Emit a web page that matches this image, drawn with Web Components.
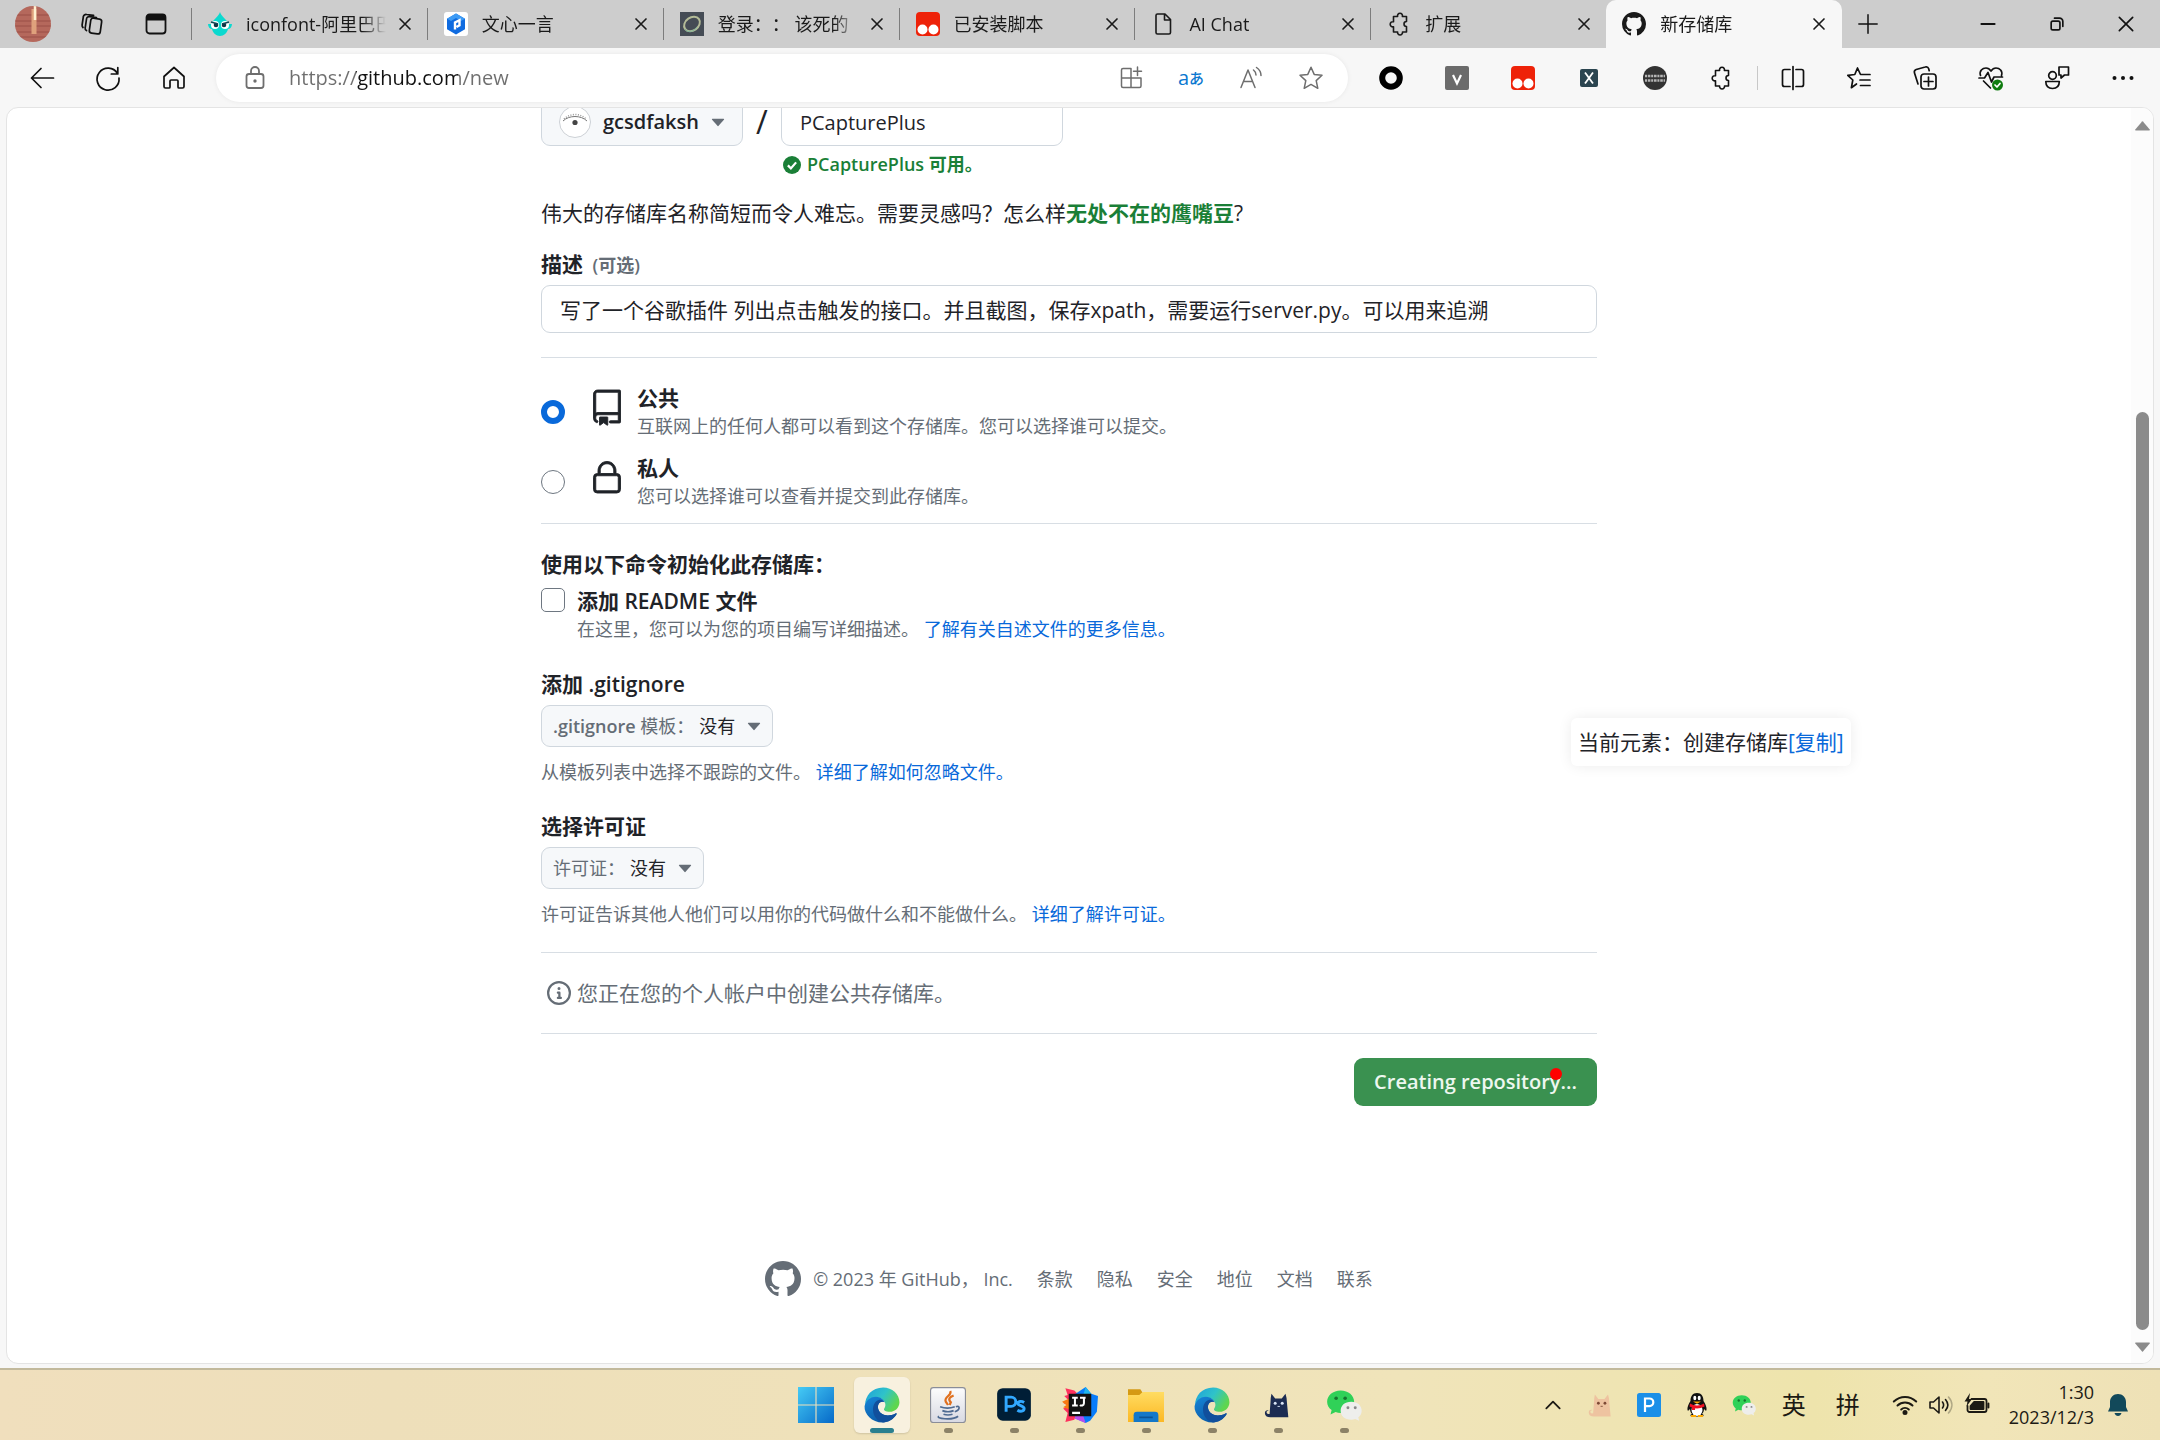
<!DOCTYPE html>
<html lang="zh-CN">
<head>
<meta charset="utf-8">
<title>新存储库</title>
<style>
  html { height: 100%; }
  body {
    margin: 0; min-height: 100%; display: flex; flex-direction: column;
    font-family: "Open Sans", "Noto Sans CJK SC", sans-serif;
    font-size: 21px; line-height: 32px; color: #1f2328; background: #f7f7f7;
    --blue: #0969da; --muted: #656d76; --green: #1a7f37; --line: #d0d7de; --small: 18px; --latin: 20px;
  }
  browser-page { flex: 1; }
</style>
</head>
<body>
<tab-strip></tab-strip>
<address-row></address-row>
<browser-page></browser-page>
<task-bar></task-bar>

<script>
const close = '<path d="M6 6l12 12M18 6L6 18"/>';
const puzzle = '<path d="M8 4.500h2.600a2.500 2.500 0 1 1 4.800 0H19.500v5a2.500 2.500 0 1 0 0 5V20h-4a2.500 2.500 0 1 1-4.900 0H6.500v-5.200a2.600 2.600 0 1 1 0-5V4.500z"/>';
const edge = `<defs><linearGradient id="e1" x1="0" y1="0" x2="1" y2=".5"><stop offset="0" stop-color="#1f9fdc"/><stop offset=".55" stop-color="#2fc3c9"/><stop offset="1" stop-color="#5fd64e"/></linearGradient><linearGradient id="e2" x1="0" y1="0" x2=".6" y2="1"><stop offset="0" stop-color="#1685d8"/><stop offset="1" stop-color="#0c59a4"/></linearGradient></defs>
<path fill="url(#e1)" d="M1 16C1 8 7 0.500 17 0.500c8 0 14.500 6 14.500 13 0 5-4 8.500-8.500 8.500-4 0-6-1.500-5-3 1.500-2 1.500-5-1-7.500C12 7 4 9 1 16z"/>
<path fill="url(#e2)" d="M.5 17C2 10 9 7 14.500 9.500c2 1 3.500 2.500 3.800 4-4-1.500-7 2-5.500 6.500 1.700 5 8.500 7 15.200 3.500.8-.4 1.300.2.800 1C26 29 21.500 31.500 16.500 31.500 7 31.500 0 24 .5 17z"/>
<path fill="#114f9c" d="M8 20c0-4 2-7.500 5-8.500 2-.6 4 .3 5.300 2-4-1.500-7 2-5.500 6.500 1.700 5 8.500 7 15.200 3.500.8-.4 1.300.2.800 1C26 29 21.500 31.500 17 31.500 12 30.500 8 26 8 20z"/>`;
const wechat = `<path fill="#30d158" d="M13 3C6 3 1 7.500 1 13c0 3 1.500 5.500 4 7.500l-1 4 4.500-2.300c1.400.5 3 .8 4.500.8 7 0 12-4.500 12-10S20 3 13 3z"/><circle cx="9" cy="10" r="1.600" fill="#16752f"/><circle cx="17" cy="10" r="1.600" fill="#16752f"/><path fill="#eeeeec" d="M22.500 13C16.500 13 13 16.500 13 21s3.500 8 9.500 8c1.200 0 2.400-.2 3.500-.6l3.500 1.600-.8-3.200c2-1.400 3-3.400 3-5.800 0-4.500-3.700-8-9.200-8z"/><circle cx="19.500" cy="18.500" r="1.300" fill="#888"/><circle cx="26" cy="18.500" r="1.300" fill="#888"/>`;
const monkey = '<rect width="24" height="24" rx="4" fill="#ee2209"/><circle cx="6.500" cy="17.500" r="5" fill="#fff" /><circle cx="17.500" cy="17.500" r="5" fill="#fff"/>';
const cat = (body, eye) => `<path fill="${body}" d="M9 4l4 5h7l4-5c1 3 1.500 6 1.500 9L27 29H8c-4 0-6-1.500-6-4.500S5 21 6 22c-2 0-2.500 1-2 2.500.5 1 1.500 1.300 3 1L8 13c0-3 .3-6 1-9z"/><circle cx="13" cy="14" r="1.600" fill="${eye}"/><circle cx="20.500" cy="14" r="1.600" fill="${eye}"/><path d="M15.500 17.500h2.500" stroke="${eye}" stroke-width="1"/>`;

/* s: stroked outline on a 24 grid; f: filled drawing with its own view box */
const ICONS = {
  close: { s: close, w: 2 },
  workspaces: { s: '<rect x="10" y="6.500" width="11" height="15" rx="2.500" transform="rotate(8 15 14)"/><path d="M6.500 18.500C5.500 18 5 17 5.200 16l1.300-9c.2-1.600 1.500-2.500 3-2.300l7 .8M3 15.500c-.8-.7-1-1.500-.9-2.500l1.200-8C3.500 3.300 5 2.200 6.600 2.500l7 .8"/>' },
  vtabs: { s: '<rect x="2.500" y="2.500" width="19" height="19" rx="3"/><path fill="currentColor" d="M3 7.500V6a3 3 0 0 1 3-3h12a3 3 0 0 1 3 3v1.500z"/>', w: 1.8 },
  file: { s: '<path d="M5 3.500A1.500 1.500 0 0 1 6.500 2H14l5.500 5.500v13A1.500 1.500 0 0 1 18 22H6.500A1.500 1.500 0 0 1 5 20.500zM13.500 2v6h6"/>', w: 1.6 },
  puzzle: { s: puzzle, w: 1.6 },
  plus: { s: '<path d="M12 1v22M1 12h22"/>', w: 1.8 },
  min: { s: '<path d="M4 12h16"/>', w: 2.2 },
  restore: { s: '<rect x="5" y="8.500" width="10.500" height="10.500" rx="2"/><path d="M9 5h6a4 4 0 0 1 4 4v6"/>', w: 2 },
  wclose: { s: '<path d="M4 4l16 16M20 4L4 20"/>', w: 2 },
  back: { s: '<path d="M23.500 12H1.500M11 2.500L1.500 12l9.500 9.500"/>' },
  reload: { s: '<path d="M21.500 7.500A11 11 0 1 0 23 12M21.800 1.500v6.500h-6.500"/>' },
  home: { s: '<path d="M2 10.500L12 1.500l10 9V20.500a1.500 1.500 0 0 1-1.500 1.500h-3.500a1 1 0 0 1-1-1V15a1 1 0 0 0-1-1h-6a1 1 0 0 0-1 1v6a1 1 0 0 1-1 1H3.500A1.500 1.500 0 0 1 2 20.500z"/>' },
  padlock: { s: '<rect x="3.500" y="8" width="17" height="14" rx="2.500"/><path d="M8 8V5a4 4 0 0 1 8 0v3"/><circle cx="12" cy="15" r=".8" fill="currentColor"/>', w: 1.8 },
  apps: { s: '<path d="M12 2.500H4A1.500 1.500 0 0 0 2.500 4v16A1.500 1.500 0 0 0 4 21.500H20.500a1.500 1.500 0 0 0 1.500-1.500v-8H2.500M12 2.500v19M18.500 1v8.500M14.500 5.200h8"/>', w: 1.5 },
  readaloud: { s: '<path d="M2 21.500L9 4l7 17.500M4.500 15.500h9M14.500 4c1.500 1.200 2.500 3 2.500 5M17.500 1.500C20.500 3.500 22 6 22 9.500"/>', w: 1.5 },
  star: { s: '<path d="M12 1.200l3.200 7.200 7.800.9-5.800 5.300 1.600 7.700L12 18.400l-6.800 3.900 1.600-7.700L1 9.300l7.800-.9z"/>', w: 1.5 },
  split: { s: '<path d="M9 3.500H3.500A2 2 0 0 0 1.500 5.500v13a2 2 0 0 0 2 2H9M15 3.500h5.500a2 2 0 0 1 2 2v13a2 2 0 0 1-2 2H15M12 .5v23"/>', w: 1.7 },
  favs: { s: '<path d="M15 8.500h-1.500L10.500 2 7.800 8.500.8 9.300l5 4.700-1.400 7.700L9.500 18M14.500 8.500h8.500M13 14h10M13.500 19.500h9.500"/>', w: 1.7 },
  collections: { s: '<rect x="8" y="8" width="15" height="15" rx="3"/><path d="M15.500 11v9M11 15.500h9M5 18L1.500 7C1 5.300 1.700 4 3.200 3.500l9-2.500c1.500-.5 3 .2 3.500 1.700l.5 2"/>', w: 1.7 },
  health: { s: '<path d="M1.500 9.500C0 5 3.500 2 7 2c2.500 0 4 1.500 5 3 1-1.500 2.500-3 5-3 3.500 0 7 3 5.500 7.500M0 12h5.500l3.500-5.500 3.500 9.500 2.500-5h8.500M4.500 15l7 7"/><circle cx="18.500" cy="19" r="5.500" fill="#107c10" stroke="none"/><path stroke="#fff" d="M16 19l2 2 3-3.500"/>', w: 1.7 },
  people: { s: '<circle cx="7.500" cy="9.500" r="3.800"/><path d="M.8 15.500h13.500c0 4.500-2.500 7-6.800 7s-6.700-2.500-6.700-7zM14 1h9.500v8h-4l-3.500 3V9h-2z"/>', w: 1.7 },
  dots: { f: '<circle cx="3.500" cy="12" r="2"/><circle cx="12" cy="12" r="2"/><circle cx="20.500" cy="12" r="2"/>' },
  ring: { f: '<circle cx="12" cy="12" r="8.800" fill="none" stroke="#000" stroke-width="6"/>' },
  vbox: { f: '<rect width="24" height="24" rx="2" fill="#6b6b6b"/><path d="M8 9l4 8.500L16 9" fill="none" stroke="#fff" stroke-width="2.200"/>' },
  monkey: { f: monkey },
  xbox: { f: '<rect x="3" y="3" width="18" height="18" rx="2" fill="#2b4550"/><path d="M8 6.500l8 11M16 6.500l-8 11" stroke="#fff" stroke-width="1.800"/>' },
  badge: { f: '<circle cx="12" cy="12" r="12" fill="#333"/><path d="M2 10h20M2 14.500h20" stroke="#b5b5b5" stroke-width="2.600" stroke-dasharray="2 .8 2.600 .8"/>' },
  iconfont: { f: '<path d="M12 0c1 4 7 8 9 12h3c0 3-2 5-4 5-1 4-4 7-8 7s-7-3-8-7c-2 0-4-2-4-5h3c2-4 8-8 9-12z" fill="#0bd9cf"/><circle cx="7" cy="13" r="4" fill="#fff"/><circle cx="17" cy="13" r="4" fill="#fff"/><circle cx="8" cy="13" r="2.300" fill="#134"/><circle cx="16" cy="13" r="2.300" fill="#134"/><path d="M3 10l7 2M21 10l-7 2" stroke="#145" stroke-width="1.500"/>' },
  yiyan: { f: '<rect width="24" height="24" rx="3" fill="#fff"/><path d="M12 1.500l9 5.200v10.600l-9 5.200-9-5.200V6.700z" fill="#0f6be0"/><path d="M12 1.500l9 5.200-4 2.200-5-2.800-5 2.800-4-2.200z" fill="#3d9bf5"/><path d="M11 17.500v-7l4.500-2.300v5L12.500 15" fill="none" stroke="#fff" stroke-width="2.400"/>' },
  login: { f: '<rect width="24" height="24" fill="#454c55"/><ellipse cx="12" cy="12" rx="8.500" ry="6.500" transform="rotate(-35 12 12)" fill="none" stroke="#b4bc98" stroke-width="2"/><path d="M5 17c2 4 9 3 12-2" fill="none" stroke="#7ab39a" stroke-width="1"/>' },
  github: { v: 16, f: '<path d="M8 0c4.420 0 8 3.580 8 8a8.013 8.013 0 0 1-5.450 7.590c-.4.080-.55-.17-.55-.38 0-.27.010-1.130.010-2.200 0-.75-.25-1.230-.54-1.480 1.780-.2 3.650-.88 3.650-3.950 0-.88-.31-1.590-.82-2.150.080-.2.360-1.020-.08-2.120 0 0-.67-.22-2.200.82-.64-.18-1.320-.27-2-.27-.68 0-1.360.090-2 .27-1.530-1.030-2.200-.82-2.200-.82-.44 1.100-.16 1.920-.08 2.120-.51.560-.82 1.280-.82 2.150 0 3.060 1.860 3.750 3.640 3.950-.23.2-.44.550-.51 1.070-.46.210-1.610.550-2.330-.66-.15-.24-.6-.83-1.230-.82-.67.010-.27.380.010.530.340.190.730.9.820 1.130.160.450.680 1.310 2.690.940 0 .670.010 1.300.010 1.490 0 .210-.15.450-.55.380A7.995 7.995 0 0 1 0 8c0-4.420 3.580-8 8-8Z"/>' },
  repo: { f: '<path d="M3 2.750A2.750 2.750 0 0 1 5.750 0h14.500a.75.750 0 0 1 .75.750v20.500a.75.750 0 0 1-.75.750h-6a.75.750 0 0 1 0-1.500h5.250v-4H6A1.500 1.500 0 0 0 4.500 18v.75c0 .716.430 1.334 1.050 1.605a.75.750 0 0 1-.6 1.374A3.251 3.251 0 0 1 3 18.750ZM19.500 1.500H5.750c-.69 0-1.250.560-1.250 1.250v12.651A2.989 2.989 0 0 1 6 15h13.500Z M7 18.250a.25.250 0 0 1 .25-.25h5a.25.250 0 0 1 .25.250v5.010a.25.250 0 0 1-.397.201l-2.206-1.604a.25.250 0 0 0-.294 0L7.397 23.460a.25.250 0 0 1-.397-.2v-5.010Z" stroke="currentColor" stroke-width=".6"/>' },
  lock: { f: '<path d="M6 9V7.250C6 3.845 8.503 1 12 1s6 2.845 6 6.250V9h.5a2.500 2.500 0 0 1 2.500 2.500v8a2.500 2.500 0 0 1-2.500 2.500h-13A2.500 2.500 0 0 1 3 19.500v-8A2.500 2.500 0 0 1 5.500 9Zm-1.500 2.500v8a1 1 0 0 0 1 1h13a1 1 0 0 0 1-1v-8a1 1 0 0 0-1-1h-13a1 1 0 0 0-1 1Zm3-4.250V9h9V7.250c0-2.670-1.922-4.750-4.500-4.750-2.578 0-4.500 2.080-4.500 4.750Z" stroke="currentColor" stroke-width=".6"/>' },
  info: { v: 16, f: '<path d="M0 8a8 8 0 1 1 16 0A8 8 0 0 1 0 8Zm8-6.500a6.500 6.500 0 1 0 0 13 6.500 6.500 0 0 0 0-13ZM6.500 7.750A.75.750 0 0 1 7.250 7h1a.75.750 0 0 1 .75.750v2.750h.25a.75.750 0 0 1 0 1.500h-2a.75.750 0 0 1 0-1.500h.25v-2h-.25a.75.750 0 0 1-.75-.75ZM8 6a1 1 0 1 1 0-2 1 1 0 0 1 0 2Z"/>' },
  check: { f: '<circle cx="12" cy="12" r="12"/><path d="M6.500 12.500l4 4 7-8" fill="none" stroke="#fff" stroke-width="3"/>' },
  caret: { f: '<path d="M1.500 7.500Q1.500 6.500 2.500 6.500h19q1 0 1 1L12.600 19q-.6.500-1.200 0z"/>' },
  avatar: { v: 32, f: '<circle cx="16" cy="16" r="15.500" fill="#fff" stroke="#ccd0d5"/><path d="M4 15c6-6 18-6 24 0" fill="none" stroke="#777" stroke-width="1"/><path d="M5 13c6-6 16-6 22 0" fill="none" stroke="#999" stroke-width="1.500" stroke-dasharray="1 1.500"/><circle cx="16" cy="16.500" r="2.600" fill="#444"/>' },
  profile: { v: 36, f: '<defs><clipPath id="c"><circle cx="18" cy="18" r="18"/></clipPath></defs><g clip-path="url(#c)"><path fill="#b5685c" d="M0 0h36v36H0z"/><path d="M0 9h36M0 15h36M0 20h36M0 26h36M0 31h36" stroke="#9a4f47" stroke-width="1"/><path d="M19 3v25" stroke="#dfa17c" stroke-width="5"/><path d="M20 0v14" stroke="#fff0d0" stroke-width="2.500"/></g>' },
  windows: { v: 32, f: '<defs><linearGradient id="w" x1="0" y1="0" x2="1" y2="1"><stop offset="0" stop-color="#45cbf5"/><stop offset="1" stop-color="#0669c8"/></linearGradient></defs><path fill="url(#w)" d="M0 0h15.500v15.500H0zM16.500 0H32v15.500H16.500zM0 16.500h15.500V32H0zM16.500 16.500H32V32H16.500z"/>' },
  edge: { v: 32, f: edge },
  java: { v: 32, f: '<defs><linearGradient id="j" x1="0" y1="0" x2="0" y2="1"><stop offset="0" stop-color="#fdfdfd"/><stop offset="1" stop-color="#d8d9e2"/></linearGradient></defs><rect x=".5" y=".5" width="31" height="31" rx="2.500" fill="url(#j)" stroke="#8a8d98"/><path d="M18 3.500c2 4-6 5-4 9.500l2 3M21 7.500c-4 1.500-5 3.500-2.500 6l-1 2.500" fill="none" stroke="#e0701e" stroke-width="2"/><path d="M9 17.500c4 1.500 9 1.500 13 0M11 21c3 1.200 7 1.200 10 0M12 24.200c3 1 5 1 8 0M8 26c-4 2 12 4 17 0M23 17.500c4-1.500 4 3-1 4.500" fill="none" stroke="#4f6b92" stroke-width="1.500"/>' },
  ps: { v: 32, f: '<rect x="1" y="1" width="30" height="29" rx="5" fill="#001e36"/><path d="M9 22V9h4.500a4 4 0 0 1 0 8.200H9M25 13.700c-2.500-1.600-5.500-1-5.500 1s5.500 1.900 5.500 4.500-3.500 3-6 1.500" fill="none" stroke="#31a8ff" stroke-width="2.600"/>' },
  idea: { v: 32, f: '<path fill="#fe315d" d="M3 1l8 2 6 6-6 20-8 2 2-8-4-4 5-2-5-3 5-2-4-4 3-1z"/><path fill="#f97a12" d="M0 13l7-3v10l-6-2 3-2z"/><path fill="#087cfa" d="M21 0l5 6 6 2-1 14-6 8-4 2-9-4V6z"/><path fill="#1fb6f0" d="M21 0l5 6-8 4z"/><path fill="#b84cf0" d="M11 28l6-8 4 12z"/><path fill="#111" d="M6 6h20v20H6z"/><path d="M9 9.500h5M11.500 9.500v7M9 16.500h5M16 9.500h5M19.500 9.500v5c0 2-2.500 2.500-3.500 1.500M9 23h7" stroke="#fff" stroke-width="1.800" fill="none"/>' },
  folder: { v: 32, f: '<defs><linearGradient id="f" x1="0" y1="0" x2="0" y2="1"><stop offset="0" stop-color="#ffdc62"/><stop offset="1" stop-color="#fcb824"/></linearGradient></defs><path fill="#d59a14" d="M0 2h11l2 3-2 4H0z"/><path fill="url(#f)" d="M0 7h10l3-2.500h19V31H0z"/><path fill="#1478c8" d="M5 31v-6a3 3 0 0 1 3-3h16a3 3 0 0 1 3 3v6z"/><path d="M10 27h12" stroke="#0b5394" stroke-width="1.500"/>' },
  cat: { v: 32, f: cat('#1c2c52', '#d9e4f5') },
  peachcat: { v: 32, f: cat('#eec3a0', '#7d4a35') },
  wechat: { v: 32, f: wechat },
  chevron: { s: '<path d="M4 16l8-8 8 8"/>', w: 2.2 },
  pbox: { f: '<rect width="24" height="24" rx="2.500" fill="#1b8fe8"/><path d="M8 19V5.500h4.500a3.800 3.800 0 0 1 0 7.600H8" fill="none" stroke="#fff" stroke-width="2.200"/>' },
  qq: { f: '<path d="M12 0C7.500 0 5.500 3.500 5.500 8c-2 3-3.500 6.500-3 9 .5 1.500 1.500 0 2.500-1 0 2 1 4 2 5-2 .5-2 2.500 0 2.500h10c2 0 2-2 0-2.500 1-1 2-3 2-5 1 1 2 2.500 2.500 1 .5-2.500-1-6-3-9 0-4.500-2-8-6.500-8z" fill="#111"/><ellipse cx="12" cy="17" rx="5.500" ry="6" fill="#fff"/><path d="M5 10.500c4 2.500 10 2.500 14 0l.5 3c-5 2.500-10 2.500-15 0z" fill="#e12"/><path fill="#e12" d="M7 12l3.500 1-.5 4H7z"/><ellipse cx="9.800" cy="5" rx="1.500" ry="2.200" fill="#fff"/><ellipse cx="14.200" cy="5" rx="1.500" ry="2.200" fill="#fff"/><path fill="#fa0" d="M8 8.500h8l-4 2.200zM6 22h5v2H6zM13 22h5v2h-5z"/>' },
  wifi: { s: '<path d="M.8 8.500c6.500-6 16-6 22.400 0M4.500 12.500c4.300-4 10.700-4 15 0M8.200 16.500c2.200-2 5.400-2 7.600 0"/><circle cx="12" cy="19.500" r="1.500" fill="currentColor"/>', w: 2 },
  volume: { s: '<path d="M1 9h3.500L10 4v16l-5.500-5H1zM13.500 9c1.500 2 1.500 4 0 6"/><path d="M16.500 6.500c3 3.500 3 7.500 0 11" /><path opacity=".3" d="M19.500 4c4.500 5 4.500 11 0 16"/>', w: 1.6 },
  battery: { s: '<path d="M6.500 6H19.500a2 2 0 0 1 2 2v9a2 2 0 0 1-2 2H4.500a2 2 0 0 1-2-2V13M23.500 10.500v4"/><path fill="currentColor" d="M9 9h9.500v7H5.500v-3z"/><path stroke="none" fill="currentColor" d="M5 0L-.5 8.500h3l-1 5 5.500-7.500h-3z"/>', w: 1.8 },
  bell: { f: '<path d="M12 1c-4.500 0-8 3.500-8 8v5l-2 4.500h20L20 14V9c0-4.500-3.500-8-8-8zM8.500 20h7c-.5 2-2 3-3.500 3s-3-1-3.500-3z"/>' }
};

function define(name, html, setup) {
  const t = document.createElement('template');
  t.innerHTML = html;
  customElements.define(name, class extends HTMLElement {
    constructor() {
      super();
      this.attachShadow({ mode: 'open' }).append(t.content.cloneNode(true));
    }
    connectedCallback() { if (setup) setup(this, this.shadowRoot); }
  });
}

/* Swaps the <i> placeholder of a template for the icon its host asks for */
function placeIcon(el, root) {
  const icon = document.createElement('ui-icon');
  icon.setAttribute('name', el.getAttribute('icon'));
  root.querySelector('i').replaceWith(icon);
}

/* Shared reset for native buttons */
const btn = 'button{border:0;background:none;padding:0;margin:0;color:inherit;font:inherit;display:flex;align-items:center;justify-content:center}';

define('ui-icon', `<style>:host{display:inline-flex;flex:none;width:var(--s,24px);height:var(--s,24px)}svg{width:100%;height:100%;overflow:visible}</style><svg aria-hidden="true"></svg>`, (el, root) => {
  const i = ICONS[el.getAttribute('name')], svg = root.querySelector('svg');
  svg.setAttribute('viewBox', `0 0 ${i.v || 24} ${i.v || 24}`);
  svg.innerHTML = i.s
    ? `<g fill="none" stroke="currentColor" stroke-width="${i.w || 1.7}" stroke-linecap="round" stroke-linejoin="round">${i.s}</g>`
    : `<g fill="currentColor">${i.f}</g>`;
});

/* ---------- tab strip ---------- */
define('browser-tab', `<style>${btn}
  :host{display:flex;align-items:center;flex:1 1 0;min-width:0;box-sizing:border-box;height:32px;margin:0 0 8px;padding:0 12px 0 16px;gap:14px;border-left:1px solid #7d7d7d;font-size:var(--small);line-height:27px;color:#1a1a1a}
  :host([active]){background:#f7f7f7;height:48px;margin:0;padding:0 13px 0 16px;border-left:0;border-radius:10px 10px 0 0}
  .title{flex:1;min-width:0;overflow:hidden;white-space:nowrap;text-spacing-trim:space-all;-webkit-mask-image:linear-gradient(90deg,#000 calc(100% - 24px),transparent)}
  button{width:20px;height:20px;--s:20px;margin-left:-5px}
  </style><i></i><span class="title"><slot></slot></span><button aria-label="关闭标签页"><ui-icon name="close"></ui-icon></button>`, placeIcon);

define('tab-strip', `<style>${btn}
  :host{display:flex;align-items:flex-end;height:48px;background:#cdcdcd;color:#111}
  .lead{display:flex;align-items:center;height:48px;width:191px;box-sizing:border-box;padding-left:15px;gap:40px}
  .lead button:first-child{--s:36px;margin-right:-11px}
  .tabs{display:flex;align-items:flex-end;flex:0 1 1651px;min-width:0}
  .new{width:52px;height:48px;--s:20px}
  .win{display:flex;margin-left:auto}.win button{width:69px;height:48px;--s:20px}
  </style>
  <div class="lead"><button aria-label="个人资料"><ui-icon name="profile"></ui-icon></button><button aria-label="工作区"><ui-icon name="workspaces"></ui-icon></button><button aria-label="标签操作"><ui-icon name="vtabs"></ui-icon></button></div>
  <nav class="tabs">
    <browser-tab icon="iconfont">iconfont-阿里巴巴</browser-tab>
    <browser-tab icon="yiyan">文心一言</browser-tab>
    <browser-tab icon="login">登录：： 该死的</browser-tab>
    <browser-tab icon="monkey">已安装脚本</browser-tab>
    <browser-tab icon="file">AI Chat</browser-tab>
    <browser-tab icon="puzzle">扩展</browser-tab>
    <browser-tab icon="github" active>新存储库</browser-tab>
  </nav>
  <button class="new" aria-label="新建标签页"><ui-icon name="plus"></ui-icon></button>
  <div class="win"><button aria-label="最小化"><ui-icon name="min"></ui-icon></button><button aria-label="还原"><ui-icon name="restore"></ui-icon></button><button aria-label="关闭"><ui-icon name="wclose"></ui-icon></button></div>`);

/* ---------- toolbar ---------- */
define('address-row', `<style>${btn}
  :host{display:flex;align-items:center;height:59px;background:#f7f7f7;color:#111;padding:0 4px 0 9px}
  .nav,.ext{display:flex}.nav button,.ext button{width:66px;height:48px}
  .box{flex:1;display:flex;align-items:center;height:48px;margin:0 10px 0 9px;padding:0 7px 0 27px;border-radius:24px;background:#fff;box-shadow:0 0 5px #0001;color:#6e6e6e}
  input{flex:1;min-width:0;margin:0 0 0 22px;padding:0;border:0;outline:0;font:inherit;font-size:var(--latin);line-height:32px;
    color:#6e6e6e;-webkit-text-fill-color:transparent;-webkit-background-clip:text;background-clip:text;
    background-image:linear-gradient(90deg,#6e6e6e 67px,#111 67px,#111 169px,#6e6e6e 169px)}
  .box button{width:60px}
  .lang{color:#0b78d0;font-size:20px}.lang b{font-size:15px;font-weight:500}
  .sep{width:1px;height:24px;margin:12px 2px 12px 3px;background:#c8c8c8}
  </style>
  <div class="nav"><button aria-label="返回"><ui-icon name="back"></ui-icon></button><button aria-label="刷新"><ui-icon name="reload"></ui-icon></button><button aria-label="主页"><ui-icon name="home"></ui-icon></button></div>
  <div class="box"><ui-icon name="padlock"></ui-icon><input type="text" aria-label="地址" value="https://github.com/new">
    <button aria-label="应用"><ui-icon name="apps"></ui-icon></button><button class="lang">a<b>あ</b></button><button aria-label="朗读"><ui-icon name="readaloud"></ui-icon></button><button aria-label="收藏"><ui-icon name="star"></ui-icon></button></div>
  <div class="ext"></div>`, (el, root) => {
  const b = n => `<button aria-label="${n}"><ui-icon name="${n}"></ui-icon></button>`;
  root.querySelector('.ext').innerHTML =
    ['ring', 'vbox', 'monkey', 'xbox', 'badge', 'puzzle'].map(b).join('') + '<span class="sep"></span>' +
    ['split', 'favs', 'collections', 'health', 'people', 'dots'].map(b).join('');
});

/* ---------- page ---------- */
define('menu-button', `<style>${btn}
  :host{display:block}
  button{height:42px;padding:0 11px;border:1px solid var(--line);border-radius:9px;background:#f6f8fa;font-size:var(--small);line-height:27px;white-space:nowrap;--s:14px;gap:12px}
  :host([large]) button{height:48px;padding:0 17px;font-size:var(--latin);line-height:24px;font-weight:600}
  ::slotted([slot=label]){color:var(--muted);margin-right:5px}ui-icon[name=caret]{color:var(--muted)}
  </style><button aria-haspopup="menu"><slot name="lead"></slot><span><slot name="label"></slot><slot></slot></span><ui-icon name="caret"></ui-icon></button>`);

define('visibility-option', `<style>
  :host{display:block}
  label{display:flex;align-items:center;--s:36px}
  input{appearance:none;box-sizing:border-box;width:24px;height:24px;margin:0 24px 0 0;border:1px solid #6e7781;border-radius:50%;background:#fff;flex:none}
  input:checked{border:6px solid var(--blue)}
  ui-icon{margin:0 12px 8px 0}
  strong{display:block;font-weight:600;line-height:30px}
  small{display:block;font-size:var(--small);line-height:27px;color:var(--muted)}
  </style><label><input type="radio" name="visibility"><i></i><span><strong><slot name="title"></slot></strong><small><slot></slot></small></span></label>`, (el, root) => {
  root.querySelector('input').checked = el.hasAttribute('checked');
  placeIcon(el, root);
});

define('repo-form', `<style>${btn}
  :host{display:block}
  form{margin:0}
  .row{display:flex;align-items:center;margin-top:-10px;height:48px}
  .row menu-button{margin:0}
  .slash{font-size:32px;line-height:26px;width:38px;text-align:center;font-weight:500}
  input[type=text]{box-sizing:border-box;height:48px;border:1px solid var(--line);border-radius:9px;background:#fff;padding:0 18px;font:inherit;color:inherit;outline:0}
  #name{width:282px;font-size:var(--latin);line-height:24px}
  .ok{display:flex;align-items:center;gap:6px;margin:5px 0 19px 242px;font-size:var(--small);line-height:27px;font-weight:600;color:var(--green);--s:18px}
  p{margin:0}
  p b{font-weight:600;color:var(--green)}
  .desc{display:block;margin:19px 0 4px;font-weight:600}
  .desc small{font-size:var(--small);color:var(--muted);margin-left:4px}
  #desc{width:100%;display:block}
  hr{height:1px;border:0;margin:24px 0;background:#d8dee4}
  .vis{display:flex;flex-direction:column;gap:13px;margin-top:25px}
  .vis + hr{margin:13px 0 24px}
  h2{margin:0;font-size:21px;line-height:32px;font-weight:600}
  .check{display:flex;gap:12px;margin:6px 0 25px}
  .check input{appearance:none;box-sizing:border-box;width:24px;height:24px;margin:2px 0 0;border:1px solid #6e7781;border-radius:5px;background:#fff;flex:none}
  .check label{display:block;line-height:30px;font-weight:600}
  .hint{font-size:var(--small);line-height:27px;color:var(--muted)}
  a{color:var(--blue);text-decoration:none}
  menu-button{margin:5px 0 12px}
  .hint + h2{margin-top:24px}
  .info{display:flex;align-items:center;gap:6px;padding-left:6px;color:var(--muted)}
  .end{display:flex;justify-content:flex-end}
  .submit{position:relative;height:48px;padding:0 20px;border-radius:9px;background:#3a9150;color:#edf7ef;font-size:var(--latin);font-weight:600}
  .dot{position:absolute;right:35px;top:10px;width:12px;height:12px;border-radius:50%;background:#f00}
  </style>
  <form onsubmit="return false">
    <div class="row"><menu-button large><ui-icon slot="lead" name="avatar" style="--s:32px"></ui-icon>gcsdfaksh</menu-button><span class="slash">/</span><input id="name" type="text" aria-label="存储库名称" value="PCapturePlus"></div>
    <div class="ok"><ui-icon name="check"></ui-icon><span>PCapturePlus 可用。</span></div>
    <p>伟大的存储库名称简短而令人难忘。需要灵感吗？怎么样<b>无处不在的鹰嘴豆</b>?</p>
    <label class="desc" for="desc">描述 <small>(可选)</small></label>
    <input id="desc" type="text" value="写了一个谷歌插件 列出点击触发的接口。并且截图，保存xpath，需要运行server.py。可以用来追溯">
    <hr>
    <div class="vis">
      <visibility-option icon="repo" checked><span slot="title">公共</span>互联网上的任何人都可以看到这个存储库。您可以选择谁可以提交。</visibility-option>
      <visibility-option icon="lock"><span slot="title">私人</span>您可以选择谁可以查看并提交到此存储库。</visibility-option>
    </div>
    <hr>
    <h2>使用以下命令初始化此存储库：</h2>
    <div class="check"><input type="checkbox" id="readme"><div><label for="readme">添加 README 文件</label><p class="hint">在这里，您可以为您的项目编写详细描述。 <a href="#">了解有关自述文件的更多信息。</a></p></div></div>
    <h2>添加 .gitignore</h2>
    <menu-button><span slot="label"><b style="font-weight:600">.gitignore</b> 模板：</span>没有</menu-button>
    <p class="hint">从模板列表中选择不跟踪的文件。 <a href="#">详细了解如何忽略文件。</a></p>
    <h2>选择许可证</h2>
    <menu-button><span slot="label">许可证：</span>没有</menu-button>
    <p class="hint">许可证告诉其他人他们可以用你的代码做什么和不能做什么。 <a href="#">详细了解许可证。</a></p>
    <hr>
    <p class="info"><ui-icon name="info"></ui-icon>您正在您的个人帐户中创建公共存储库。</p>
    <hr>
    <div class="end"><button class="submit">Creating repository...<span class="dot"></span></button></div>
  </form>`);

define('site-footer', `<style>
  :host{display:flex;align-items:center;justify-content:center;gap:24px;font-size:var(--small);line-height:36px;color:var(--muted)}
  .copy{display:flex;gap:12px;--s:36px}a{color:inherit;text-decoration:none}
  </style><span class="copy"><ui-icon name="github"></ui-icon><span>© 2023 年 GitHub， Inc.</span></span><a href="#">条款</a><a href="#">隐私</a><a href="#">安全</a><a href="#">地位</a><a href="#">文档</a><a href="#">联系</a>`);

define('element-tip', `<style>
  :host{position:absolute;display:block;padding:8px 7px;border-radius:6px;background:#fff;box-shadow:0 0 14px #00000014;white-space:nowrap;color:#1f2328}
  a{color:var(--blue);text-decoration:none}</style>当前元素：创建存储库<a href="#">[复制]</a>`);

define('browser-page', `<style>
  :host{display:flex;background:#f7f7f7;padding:0 6px 4px}
  .card{position:relative;flex:1;display:flex;overflow:hidden;border:1px solid #e4e4e4;border-radius:12px;background:#fff}
  .body{flex:1;padding:0 24px 0}
  repo-form{max-width:1056px;margin:0 auto}
  site-footer{margin:155px 0 56px}
  element-tip{left:1564px;top:610px}
  .bar{width:22px;display:flex;flex-direction:column;align-items:center;background:#fcfcfc;padding:10px 0 8px;color:#8b8b8b;--s:17px}
  .up{transform:rotate(180deg)}
  .track{flex:1;display:flex;flex-direction:column;margin-bottom:8px}
  .thumb{width:13px;flex:915;border-radius:7px;background:#8b8b8b}.track::before{content:"";flex:276}
  </style>
  <div class="card"><main class="body"><repo-form></repo-form><site-footer></site-footer></main>
  <div class="bar"><ui-icon class="up" name="caret"></ui-icon><div class="track"><div class="thumb"></div></div><ui-icon name="caret"></ui-icon></div>
  <element-tip></element-tip></div>`);

/* ---------- taskbar ---------- */
define('task-app', `<style>${btn}
  :host{display:block;--s:36px}
  button{position:relative;width:56px;height:56px;border-radius:6px}
  :host([active]) button{background:#f8f1df;box-shadow:0 1px 2px #0002}
  :host([small]) button{--s:30px}
  :host([running]) button::after{content:"";position:absolute;bottom:0;width:9px;height:5px;border-radius:3px;background:#8c8267}
  :host([active]) button::after{width:24px;background:#2a7f8f}
  </style><button><i></i></button>`, (el, root) => {
  root.querySelector('button').setAttribute('aria-label', el.getAttribute('icon'));
  placeIcon(el, root);
});

define('task-bar', `<style>${btn}
  :host{display:grid;grid-template-columns:1fr auto 1fr;align-items:center;height:72px;box-sizing:border-box;padding-bottom:1px;border-top:2px solid #c2b99c;background:linear-gradient(90deg,#f0dfbd,#eedfba 18%,#f0e4ba 65%,#eee4ac 84%,#f1e5b8 92%,#eee1b6);color:#1c1a14}
  .apps{grid-column:2;display:flex;gap:10px}
  .tray{display:flex;align-items:center;justify-content:flex-end;padding-right:30px}
  .tray button{width:48px;height:48px}
  .tray .ime{font-size:24px;width:54px}
  .tray .first{width:46px}
  .sys{display:flex;gap:12px;margin:0 20px 0 18px}
  .time{text-align:right;font-size:var(--small);line-height:25px;margin-right:12px}
  .bell{color:#12495a}
  </style>
  <div class="apps">
    <task-app icon="windows"></task-app><task-app icon="edge" active running></task-app><task-app icon="java" running></task-app><task-app icon="ps" running></task-app><task-app icon="idea" running></task-app><task-app icon="folder" running></task-app><task-app icon="edge" running></task-app><task-app icon="cat" small running></task-app><task-app icon="wechat" running></task-app>
  </div>
  <div class="tray">
    <button style="--s:20px" aria-label="显示隐藏的图标"><ui-icon name="chevron"></ui-icon></button>
    <button style="--s:28px" aria-label="猫"><ui-icon name="peachcat"></ui-icon></button>
    <button aria-label="P"><ui-icon name="pbox"></ui-icon></button>
    <button aria-label="QQ"><ui-icon name="qq"></ui-icon></button>
    <button class="first" aria-label="微信"><ui-icon name="wechat"></ui-icon></button>
    <button class="ime">英</button><button class="ime">拼</button>
    <span class="sys"><ui-icon name="wifi"></ui-icon><ui-icon name="volume"></ui-icon><ui-icon name="battery"></ui-icon></span>
    <div class="time"><div>1:30</div><div>2023/12/3</div></div>
    <ui-icon class="bell" name="bell"></ui-icon>
  </div>`);
</script>
</body>
</html>
